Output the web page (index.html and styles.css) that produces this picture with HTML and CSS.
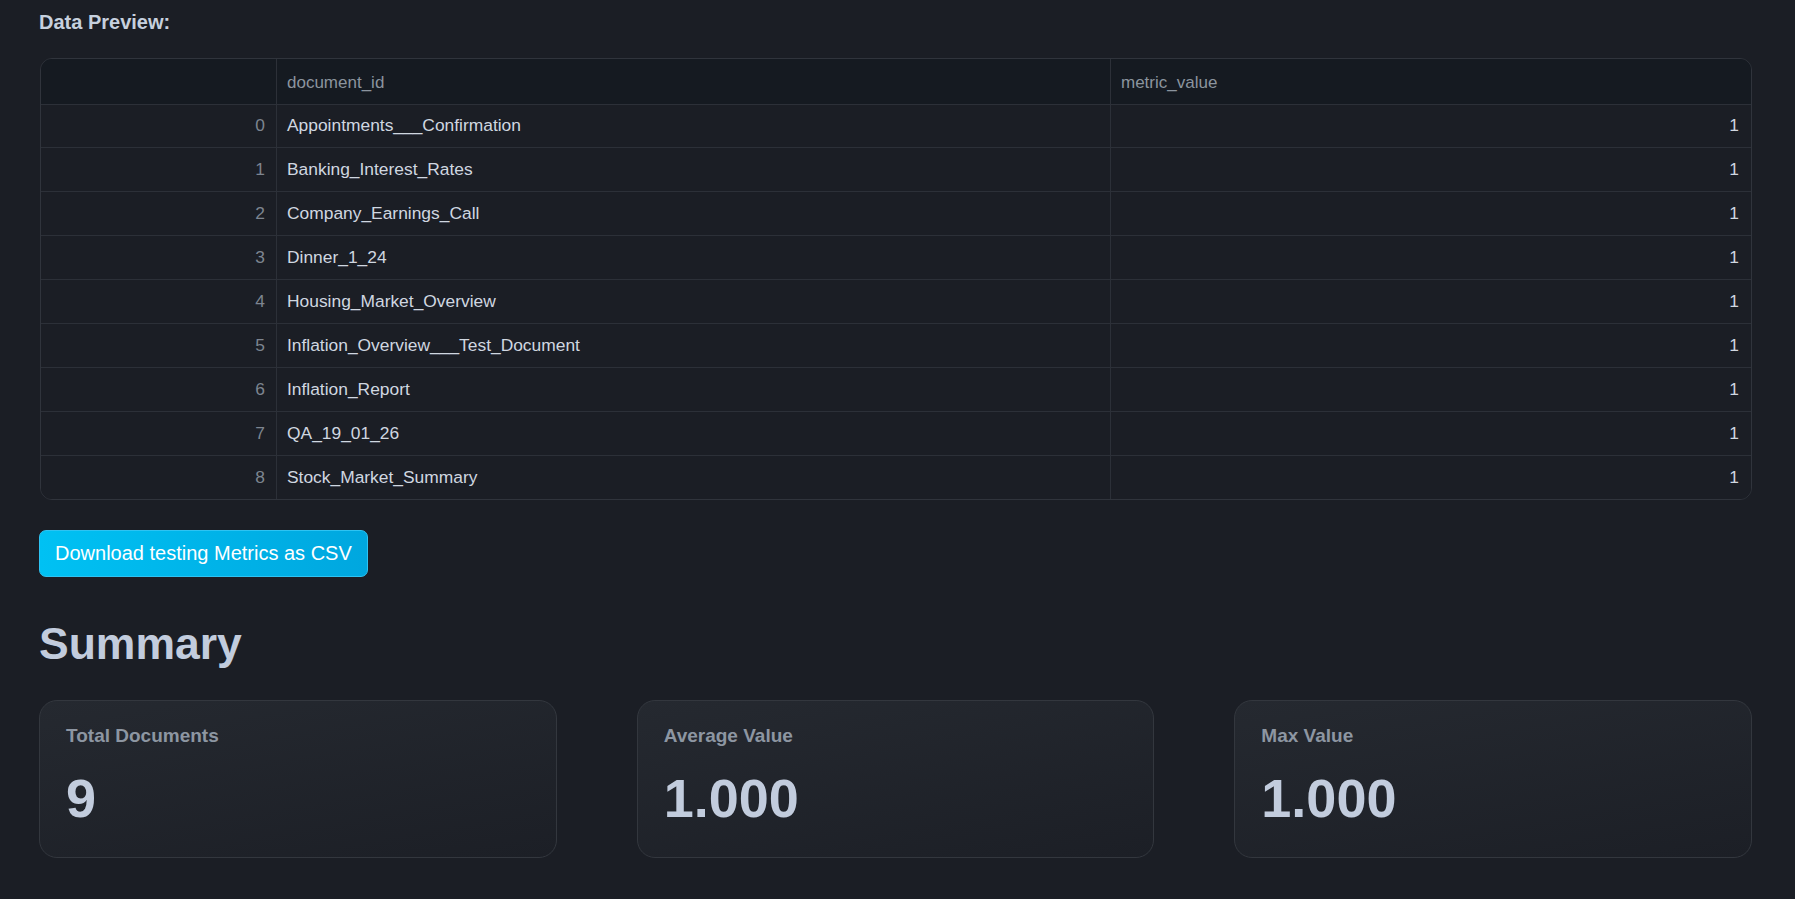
FILE: index.html
```html
<!DOCTYPE html>
<html lang="en">
<head>
    <meta charset="UTF-8">
    <meta name="viewport" content="width=device-width, initial-scale=1.0">
    <title>Testing Metrics</title>
    <link rel="stylesheet" href="styles.css">
</head>
<body>
    <div class="page">
        <h3 class="preview-title">Data Preview:</h3>
        <div class="table-wrap">
            <table class="data-table">
                <colgroup>
                    <col class="col-index">
                    <col class="col-doc">
                    <col>
                </colgroup>
                <thead>
                    <tr>
                        <th></th>
                        <th>document_id</th>
                        <th>metric_value</th>
                    </tr>
                </thead>
                <tbody>
                    <tr><td class="idx">0</td><td>Appointments___Confirmation</td><td class="num">1</td></tr>
                    <tr><td class="idx">1</td><td>Banking_Interest_Rates</td><td class="num">1</td></tr>
                    <tr><td class="idx">2</td><td>Company_Earnings_Call</td><td class="num">1</td></tr>
                    <tr><td class="idx">3</td><td>Dinner_1_24</td><td class="num">1</td></tr>
                    <tr><td class="idx">4</td><td>Housing_Market_Overview</td><td class="num">1</td></tr>
                    <tr><td class="idx">5</td><td>Inflation_Overview___Test_Document</td><td class="num">1</td></tr>
                    <tr><td class="idx">6</td><td>Inflation_Report</td><td class="num">1</td></tr>
                    <tr><td class="idx">7</td><td>QA_19_01_26</td><td class="num">1</td></tr>
                    <tr><td class="idx">8</td><td>Stock_Market_Summary</td><td class="num">1</td></tr>
                </tbody>
            </table>
        </div>

        <button class="download-btn">Download testing Metrics as CSV</button>

        <h2 class="summary-title">Summary</h2>
        <div class="cards">
            <div class="card">
                <div class="card-label">Total Documents</div>
                <div class="card-value">9</div>
            </div>
            <div class="card">
                <div class="card-label">Average Value</div>
                <div class="card-value">1.000</div>
            </div>
            <div class="card">
                <div class="card-label">Max Value</div>
                <div class="card-value">1.000</div>
            </div>
        </div>
    </div>
</body>
</html>
```

FILE: styles.css
```css
body {
    font-family: "Liberation Sans", Arial, sans-serif;
    margin: 0;
    padding: 0;
    background-color: #1b1e25;
    color: #c9d1d9;
}
.page {
    padding: 10px 43px 0 39px;
}
.preview-title {
    margin: 0;
    font-size: 20px;
    line-height: 24px;
    font-weight: bold;
    color: #c6d0de;
}
.table-wrap {
    margin-top: 24px;
    margin-left: 1px;
    border: 1px solid #30343c;
    border-radius: 12px;
    overflow: hidden;
}
.data-table {
    width: 100%;
    border-collapse: separate;
    border-spacing: 0;
    table-layout: fixed;
    font-size: 17.4px;
}
.col-index {
    width: 236px;
}
.col-doc {
    width: 834px;
}
.data-table th, .data-table td {
    border-right: 1px solid #2c3038;
    border-bottom: 1px solid #2c3038;
    padding: 0 10px;
    text-align: left;
    white-space: nowrap;
}
.data-table th:last-child, .data-table td:last-child {
    border-right: none;
}
.data-table tbody tr:last-child td {
    border-bottom: none;
}
.data-table th {
    height: 45.5px;
    padding-top: 3px;
    box-sizing: border-box;
    font-size: 17px;
    background-color: #151a21;
    color: #8b949e;
    font-weight: normal;
}
.data-table td {
    height: 42.9px;
    background-color: #1b1e25;
    color: #d0d7e0;
}
.data-table td.idx {
    text-align: right;
    color: #7d8590;
    padding-right: 11px;
}
.data-table td.num {
    text-align: right;
    padding-right: 12px;
}
.download-btn {
    display: block;
    margin-top: 30px;
    height: 47px;
    padding: 0 15px;
    font-family: "Liberation Sans", Arial, sans-serif;
    font-size: 20px;
    color: #ffffff;
    background: linear-gradient(90deg, #00c1f3, #00a7df);
    border: 1px solid #2ec3f2;
    border-radius: 7px;
    cursor: pointer;
}
.summary-title {
    margin: 41px 0 0 0;
    font-size: 44.5px;
    line-height: 52px;
    font-weight: bold;
    color: #c2ccdd;
}
.cards {
    display: grid;
    grid-template-columns: repeat(3, 1fr);
    gap: 80px;
    margin-top: 30px;
}
.card {
    height: 158px;
    padding: 24px 26px 0 26px;
    box-sizing: border-box;
    border: 1px solid #33373e;
    border-radius: 18px;
    background: linear-gradient(170deg, #252930 0%, #1c1f26 100%);
}
.card-label {
    font-size: 19px;
    line-height: 22px;
    font-weight: bold;
    color: #8d96a2;
}
.card-value {
    margin-top: 21px;
    font-size: 54px;
    line-height: 60px;
    font-weight: bold;
    color: #c2ccdd;
}
```
